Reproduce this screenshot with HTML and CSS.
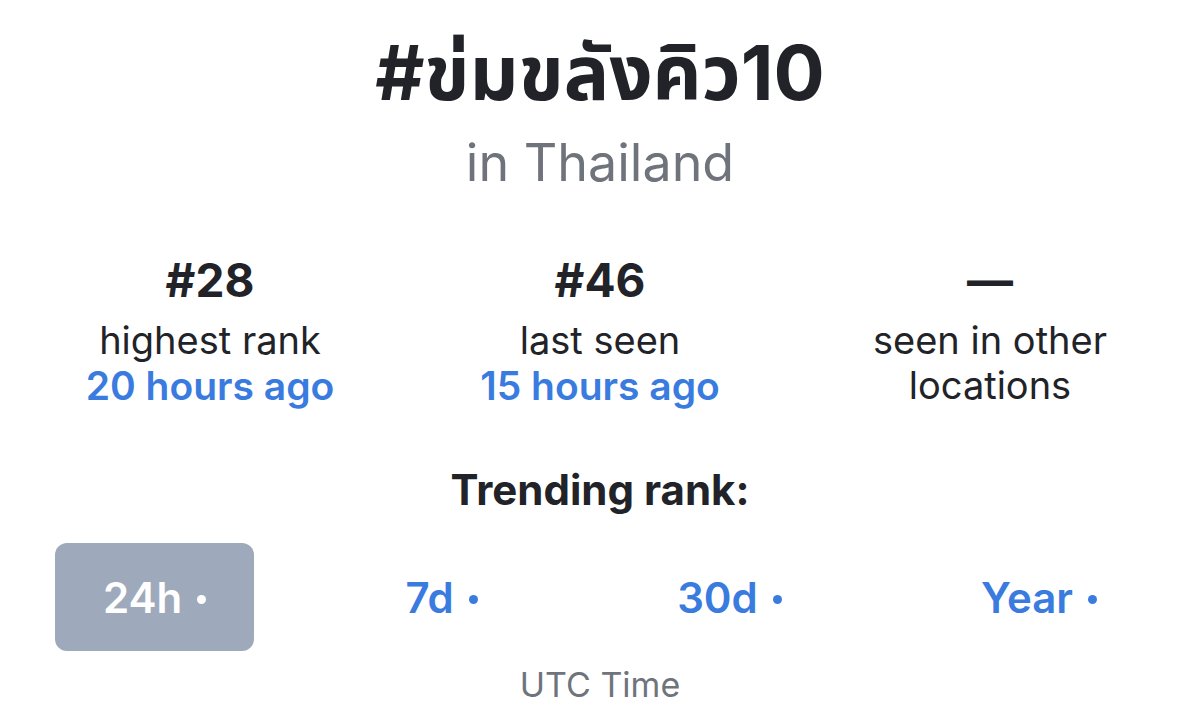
FILE: index.html
```html
<!DOCTYPE html>
<html lang="en">
  <head>
    <meta charset="UTF-8" />
    <meta name="viewport" content="width=device-width, initial-scale=1.0" />
    <title>#ข่มขลังคิว10 in Thailand</title>
    <link rel="stylesheet" href="styles.css">
  </head>

  <body>
    <div class="container">
      <div class="header">
        <h1 class="tag">#ข่มขลังคิว10</h1>
        <p class="place">in Thailand</p>
      </div>

      <div class="stats">
        <div class="stat">
          <div class="rank">#28</div>
          <div class="label">highest rank</div>
          <div class="when">20 hours ago</div>
        </div>
        <div class="stat">
          <div class="rank">#46</div>
          <div class="label">last seen</div>
          <div class="when">15 hours ago</div>
        </div>
        <div class="stat">
          <div class="rank">—</div>
          <div class="label">seen in other<br />locations</div>
        </div>
      </div>

      <div class="trending">
        <h2 class="trending_title">Trending rank:</h2>
        <div class="tabs">
          <div class="tab active">24h<span class="dot"></span></div>
          <div class="tab">7d<span class="dot"></span></div>
          <div class="tab">30d<span class="dot"></span></div>
          <div class="tab">Year<span class="dot"></span></div>
        </div>
        <div class="utc">UTC Time</div>
      </div>
    </div>
  </body>
</html>
```

FILE: styles.css
```css
body {
  margin: 0;
  background-color: #ffffff;
  color: #212328;
  font-family: Inter, "Noto Sans", "Noto Sans Thai", sans-serif;
}

.container {
  width: 1200px;
}

.header {
  padding-top: 32px;
  text-align: center;
}

.tag {
  margin: 0;
  font-size: 76px;
  line-height: 80px;
  font-weight: 700;
}

.place {
  margin: 16px 0 0;
  font-size: 52px;
  line-height: 70px;
  color: #6f747c;
}

.stats {
  display: flex;
  padding: 0 15px;
  margin-top: 54px;
}

.stat {
  flex: 1;
  text-align: center;
}

.rank {
  font-size: 46px;
  line-height: 56px;
  font-weight: 700;
}

.label {
  margin-top: 10px;
  font-size: 38px;
  line-height: 45px;
}

.when {
  font-size: 39px;
  line-height: 45px;
  font-weight: 600;
  color: #3a7be0;
}

.trending {
  margin-top: 57px;
  text-align: center;
}

.trending_title {
  margin: 0;
  font-size: 42px;
  line-height: 50px;
  font-weight: 700;
}

.tabs {
  display: flex;
  justify-content: space-between;
  padding: 0 55px;
  margin-top: 28px;
}

.tab {
  padding: 0 48px;
  height: 108px;
  display: flex;
  align-items: center;
  justify-content: center;
  font-size: 42px;
  font-weight: 600;
  color: #3a7be0;
  border-radius: 12px;
  white-space: nowrap;
}

.tab.active {
  background-color: #9eaabb;
  color: #ffffff;
}

.dot {
  width: 9px;
  height: 9px;
  margin: 4px 0 0 15px;
  border-radius: 50%;
  background-color: currentColor;
}

.utc {
  margin-top: 19px;
  font-size: 34px;
  line-height: 30px;
  color: #6f747c;
}
```
